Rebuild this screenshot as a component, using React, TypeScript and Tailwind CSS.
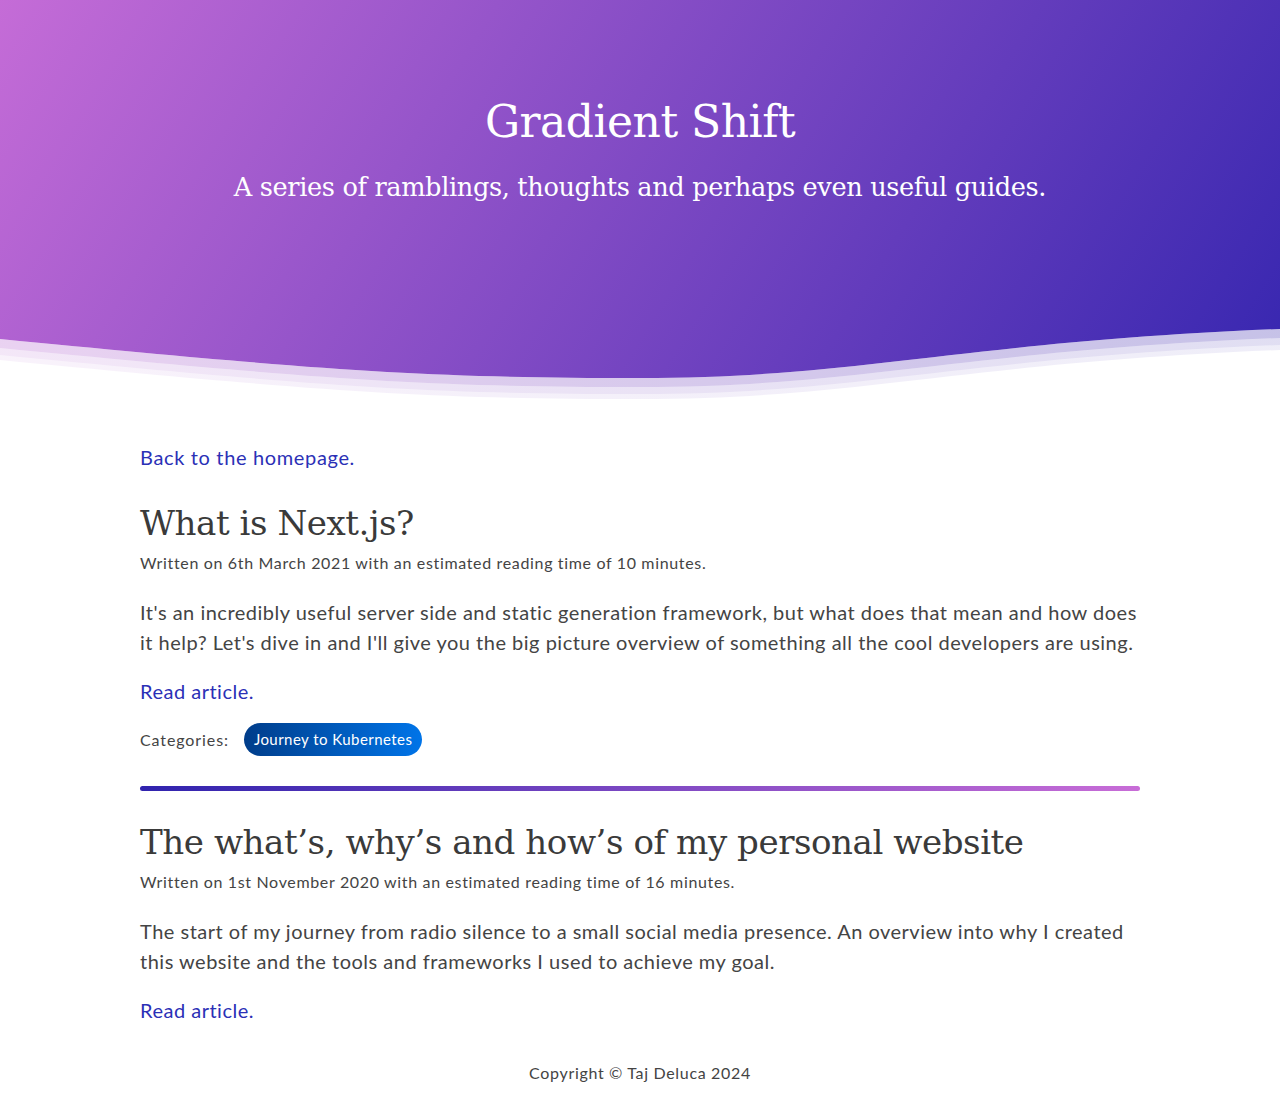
import React from "react";

const curve = (d: number) =>
  `M0 ${19 + d} C 320 ${50 + d}, 420 ${58 + d}, 640 ${58 + d} C 860 ${58 + d}, 960 ${22 + d}, 1280 ${9 + d}`;
const curveRev = (d: number) =>
  `L1280 ${9 + d} C 960 ${22 + d}, 860 ${58 + d}, 640 ${58 + d} C 420 ${58 + d}, 320 ${50 + d}, 0 ${19 + d} Z`;
const band = (a: number, b: number) => `${curve(a)} ${curveRev(b)}`;

function Wave() {
  return (
    <svg
      className="absolute bottom-0 left-0 block"
      width="1280"
      height="80"
      viewBox="0 0 1280 80"
      preserveAspectRatio="none"
    >
      <defs>
        <linearGradient id="wg" x1="0" y1="0" x2="1" y2="0">
          <stop offset="0" stopColor="#b25fce" />
          <stop offset="1" stopColor="#3424ab" />
        </linearGradient>
      </defs>
      <path d={`${curve(0)} L1280 80 L0 80 Z`} fill="#ffffff" />
      <path d={band(0, 9)} fill="url(#wg)" opacity="0.28" />
      <path d={band(9, 16)} fill="url(#wg)" opacity="0.15" />
      <path d={band(16, 21)} fill="url(#wg)" opacity="0.08" />
    </svg>
  );
}

const serif = "font-['DejaVu_Serif',serif]";
const sans = "font-['Lato',sans-serif]";

function Article({
  title,
  meta,
  lines,
  categories,
}: {
  title: string;
  meta: string;
  lines: string[];
  categories?: boolean;
}) {
  return (
    <article className="flex flex-col">
      <h2 className={`${serif} text-[34.1px] leading-[48px] text-[#3a3a3a] tracking-[-0.45px]`}>{title}</h2>
      <p className="mt-[4px] text-[16px] leading-[24px] tracking-[0.66px] text-[#444444]">{meta}</p>
      <p className="mt-[22px] text-[20px] leading-[30px] tracking-[0.5px] text-[#444444]">
        {lines.map((l, i) => (
          <React.Fragment key={i}>
            {l}
            {i < lines.length - 1 && <br />}
          </React.Fragment>
        ))}
      </p>
      <a href="#" className="mt-[19px] text-[20px] leading-[30px] tracking-[0.5px] text-[#2b30b6] self-start">
        Read article.
      </a>
      {categories && (
        <div className="mt-[17px] flex items-center gap-[15px]">
          <span className="text-[16px] leading-[24px] tracking-[0.9px] text-[#444444]">Categories:</span>
          <span className="h-[33px] px-[10px] flex items-center rounded-full bg-[linear-gradient(90deg,#003d8a,#0074e8)] text-white text-[15px] tracking-[0.45px]">
            Journey to Kubernetes
          </span>
        </div>
      )}
    </article>
  );
}

export default function App() {
  return (
    <div className={`${sans} bg-white min-h-[1107px] w-[1280px]`}>
      <header className="relative h-[400px] bg-[linear-gradient(122deg,#c96ed8_-3%,#3023ae_104%)] overflow-hidden">
        <div className="flex flex-col items-center pt-[93px] text-white">
          <h1 className={`${serif} text-[44px] leading-[58px] tracking-[-0.5px]`}>Gradient Shift</h1>
          <p className={`${serif} mt-[19px] text-[25.6px] leading-[34px] tracking-[-0.35px]`}>
            A series of ramblings, thoughts and perhaps even useful guides.
          </p>
        </div>
        <Wave />
      </header>

      <main className="w-[1000px] mx-auto pt-[42px] flex flex-col">
        <a href="#" className="text-[20px] leading-[30px] tracking-[0.65px] text-[#2b30b6] self-start">
          Back to the homepage.
        </a>
        <div className="mt-[27px]">
          <Article
            title="What is Next.js?"
            meta="Written on 6th March 2021 with an estimated reading time of 10 minutes."
            lines={[
              "It's an incredibly useful server side and static generation framework, but what does that mean and how does",
              "it help? Let's dive in and I'll give you the big picture overview of something all the cool developers are using.",
            ]}
            categories
          />
        </div>
        <div className="mt-[30px] h-[5px] rounded-full bg-[linear-gradient(90deg,#3023ae,#c86dd7)]" />
        <div className="mt-[27px]">
          <Article
            title="The what’s, why’s and how’s of my personal website"
            meta="Written on 1st November 2020 with an estimated reading time of 16 minutes."
            lines={[
              "The start of my journey from radio silence to a small social media presence. An overview into why I created",
              "this website and the tools and frameworks I used to achieve my goal.",
            ]}
          />
        </div>
      </main>

      <footer className="mt-[36px] pb-[20px] text-center text-[16px] leading-[24px] tracking-[0.67px] text-[#444444]">
        Copyright © Taj Deluca 2024
      </footer>
    </div>
  );
}
